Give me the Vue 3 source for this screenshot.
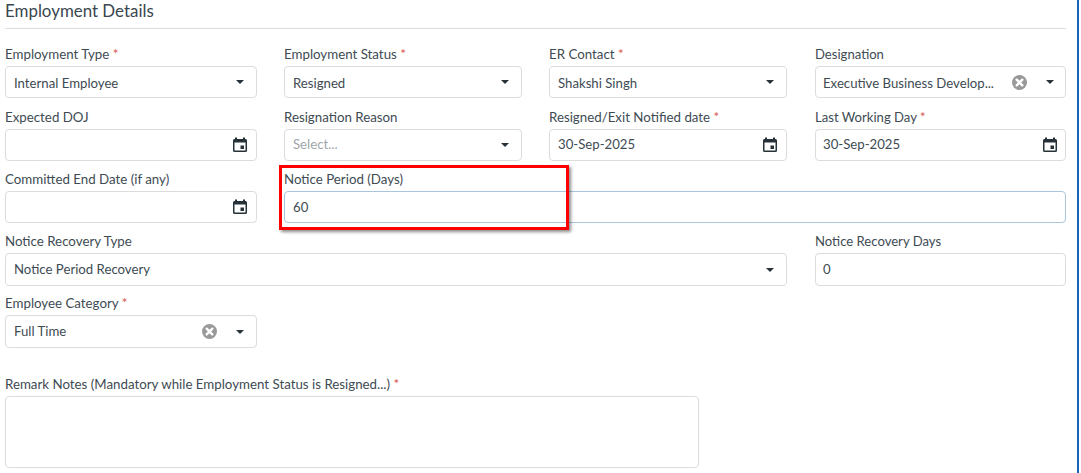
<script setup>
const rows = [
  { label: 'Employment Type', req: true, value: 'Internal Employee', kind: 'select', first: true },
  { label: 'Employment Status', req: true, value: 'Resigned', kind: 'select', first: true },
  { label: 'ER Contact', req: true, value: 'Shakshi Singh', kind: 'select', first: true },
  { label: 'Designation', value: 'Executive Business Develop...', kind: 'select', clear: true, first: true, end: true },
  { label: 'Expected DOJ', value: '', kind: 'date' },
  { label: 'Resignation Reason', value: 'Select...', kind: 'select', placeholder: true },
  { label: 'Resigned/Exit Notified date', req: true, value: '30-Sep-2025', kind: 'date' },
  { label: 'Last Working Day', req: true, value: '30-Sep-2025', kind: 'date', end: true },
  { label: 'Committed End Date (if any)', value: '', kind: 'date' },
  { label: 'Notice Period (Days)', value: '60', kind: 'text', focus: true, span: 'span3' },
  { label: 'Notice Recovery Type', value: 'Notice Period Recovery', kind: 'select', span: 'span3', tall: true },
  { label: 'Notice Recovery Days', value: '0', kind: 'text', tall: true, end: true },
  { label: 'Employee Category', req: true, value: 'Full Time', kind: 'select', clear: true, tall: true },
]
</script>

<template>
  <div class="page">
    <h2 class="title">Employment Details</h2>
    <div class="grid">
      <div v-for="f in rows" :key="f.label" class="field" :class="[f.span, { first: f.first, end: f.end }]">
        <label class="label">{{ f.label }}<span v-if="f.req" class="req"> *</span></label>
        <div class="control" :class="{ focus: f.focus, tall: f.tall }">
          <span class="value" :class="{ ph: f.placeholder }">{{ f.value }}</span>
          <svg v-if="f.clear" class="clear" viewBox="0 0 16 16" width="15" height="15">
            <circle cx="8" cy="8" r="8" fill="#999" />
            <path d="M5 5l6 6M11 5l-6 6" stroke="#fff" stroke-width="2.6" stroke-linecap="round" />
          </svg>
          <span v-if="f.kind === 'select'" class="caret"></span>
          <svg v-if="f.kind === 'date'" class="cal" viewBox="0 0 14 15" width="14" height="15">
            <path fill="#263238" d="M2 0.5h2v1.5h6V0.5h2V2h.5A1.5 1.5 0 0 1 14 3.5v10a1.5 1.5 0 0 1-1.5 1.5h-11A1.5 1.5 0 0 1 0 13.5v-10A1.5 1.5 0 0 1 1.5 2H2zM1.5 5.5v8h11v-8z" />
            <rect x="7.5" y="8.5" width="3.5" height="3.5" fill="#263238" />
          </svg>
        </div>
      </div>
    </div>
    <div class="remark">
      <label class="label">Remark Notes (Mandatory while Employment Status is Resigned...)<span class="req"> *</span></label>
      <div class="area"></div>
    </div>
    <div class="annotation"></div>
    <div class="edge"></div>
  </div>
</template>

<style scoped>
.page {
  position: relative;
  width: 1081px;
  height: 473px;
  overflow: hidden;
  background: #fff;
  box-sizing: border-box;
  padding: 0 15px 0 5px;
  font-family: "Lato", "Noto Sans", sans-serif;
  color: #3e4b53;
}
.title {
  margin: 0;
  height: 28px;
  border-bottom: 1px solid #dcdcdc;
  font-size: 16.9px;
  line-height: 21px;
  font-weight: 400;
  color: #3a4750;
}
.grid {
  display: grid;
  grid-template-columns: 252px 238px 238px 252px;
  column-gap: 27px;
  row-gap: 9px;
  margin-top: 16px;
}
.span3 { grid-column: span 3; }
.field { display: flex; flex-direction: column; }
.field.first { margin-bottom: 1px; }
.field.end { margin-left: 1px; }
.label {
  display: block;
  height: 21px;
  line-height: 18px;
  font-size: 13.3px;
  color: #3e4b53;
  white-space: nowrap;
}
.end .label { font-size: 13.1px; }
.req { color: #d9534f; }
.control {
  display: flex;
  align-items: center;
  height: 32px;
  box-sizing: border-box;
  border: 1px solid #dcdcdc;
  border-radius: 4px;
  padding: 0 11px 0 8px;
  font-size: 13.2px;
  color: #3e4b53;
}
.end .control { padding-left: 7px; }
.control.tall { height: 33px; margin-bottom: -1px; }
.focus { border-color: #a9c6de; }
.value { flex: 1; white-space: nowrap; overflow: hidden; position: relative; top: -1px; }
.first .value { top: 1px; }
.focus .value { top: 0; }
.ph { color: #a0a6aa; }
.clear { margin-right: 19px; }
.caret {
  width: 0;
  height: 0;
  margin-right: 1px;
  border-left: 4px solid transparent;
  border-right: 4px solid transparent;
  border-top: 4px solid #263238;
}
.end .caret { margin-right: 0; }
.cal { margin-right: -2px; margin-top: -2px; }
.end .cal { margin-right: -3px; }
.remark { margin-top: 28px; }
.area {
  width: 694px;
  height: 72px;
  box-sizing: border-box;
  border: 1px solid #dcdcdc;
  border-radius: 4px;
}
.annotation {
  position: absolute;
  left: 279px;
  top: 165px;
  width: 290px;
  height: 65px;
  box-sizing: border-box;
  border: 3px solid #ff0000;
  box-shadow: 2px 2px 3px rgba(0, 0, 0, 0.45);
}
.edge {
  position: absolute;
  left: 1077px;
  top: 0;
  width: 2px;
  height: 473px;
  background: #1565c0;
}
</style>
